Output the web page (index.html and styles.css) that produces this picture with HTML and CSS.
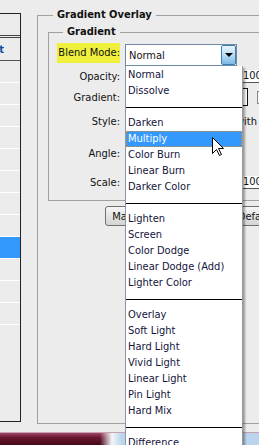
FILE: index.html
```html
<!DOCTYPE html>
<html lang="en">
<head>
    <meta charset="UTF-8">
    <link rel="stylesheet" href="styles.css">
    <title>Layer Style - Gradient Overlay</title>
</head>
<body>

<div class="page">

    <div class="styles-list">
        <div class="styles-head"></div>
        <div class="style-row first"><span class="style-name">Blending Options: Default</span></div>
        <div class="style-row"></div>
        <div class="style-row"></div>
        <div class="style-row"></div>
        <div class="style-row"></div>
        <div class="style-row"></div>
        <div class="style-row"></div>
        <div class="style-row"></div>
        <div class="style-row"></div>
        <div class="style-row selected"></div>
        <div class="style-row"></div>
        <div class="style-row"></div>
        <div class="style-row last"></div>
    </div>

    <fieldset class="group outer">
        <legend>Gradient Overlay</legend>

        <fieldset class="group inner">
            <legend>Gradient</legend>

            <div class="row row-blend">
                <label class="lbl highlight">Blend Mode:</label>
                <div class="select">
                    <span class="select-value">Normal</span>
                    <span class="select-btn"><span class="tri"></span></span>
                </div>
            </div>

            <div class="row row-opacity">
                <label class="lbl">Opacity:</label>
                <span class="num num-opacity">100</span>
            </div>

            <div class="row row-gradient">
                <label class="lbl">Gradient:</label>
                <span class="swatch"></span>
                <span class="check"></span>
            </div>

            <div class="row row-style">
                <label class="lbl">Style:</label>
                <span class="align-text">Align with Layer</span>
            </div>

            <div class="row row-angle">
                <label class="lbl">Angle:</label>
            </div>

            <div class="row row-scale">
                <label class="lbl">Scale:</label>
                <span class="num num-scale">100</span>
            </div>
        </fieldset>

        <div class="buttons">
            <button type="button" class="btn btn-make">Make Default</button>
            <button type="button" class="btn btn-reset">Reset to Default</button>
        </div>
    </fieldset>

</div>

<div class="taskbar"></div>

<!-- open blend mode list -->
<ul class="menu">
    <li>Normal</li>
    <li>Dissolve</li>
    <li class="sep"></li>
    <li>Darken</li>
    <li class="active">Multiply</li>
    <li>Color Burn</li>
    <li>Linear Burn</li>
    <li>Darker Color</li>
    <li class="sep"></li>
    <li>Lighten</li>
    <li>Screen</li>
    <li>Color Dodge</li>
    <li>Linear Dodge (Add)</li>
    <li>Lighter Color</li>
    <li class="sep"></li>
    <li>Overlay</li>
    <li>Soft Light</li>
    <li>Hard Light</li>
    <li>Vivid Light</li>
    <li>Linear Light</li>
    <li>Pin Light</li>
    <li>Hard Mix</li>
    <li class="sep"></li>
    <li>Difference</li>
</ul>

<svg class="cursor" width="13" height="20" viewBox="0 0 13 20">
    <path d="M0.5 0.5 L0.5 16.5 L4.5 12.5 L7.5 18.5 L9.5 17.5 L6.5 11.5 L11.5 11.5 Z" fill="#fff" stroke="#000" stroke-width="1"/>
</svg>

</body>
</html>
```

FILE: styles.css
```css
body {
    margin: 0;
    background-color: #ececec;
    font-family: Tahoma, "DejaVu Sans Condensed", "Liberation Sans", sans-serif;
    font-size: 11px;
    color: #111;
    overflow: hidden;
    height: 445px;
}

.page {
    display: flex;
    align-items: flex-start;
    height: 432px;
}

/* left list of styles */
.styles-list {
    box-sizing: border-box;
    width: 21px;
    flex-shrink: 0;
    height: 409px;
    margin-top: 13px;
    border-top: 1px solid #222;
    border-right: 1px solid #222;
    border-bottom: 1px solid #222;
    overflow: hidden;
}

.styles-head {
    height: 21px;
    border-bottom: 3px double #444;
}

.style-row {
    height: 21px;
    border-bottom: 1px solid #fff;
}

.style-row.first {
    box-sizing: border-box;
    height: 23px;
    border-bottom: 1px solid #555;
    display: flex;
    justify-content: flex-end;
    align-items: center;
    padding-right: 16px;
    overflow: hidden;
}

.style-name {
    font-weight: bold;
    color: #0a4f9e;
    white-space: nowrap;
}

.style-row.selected {
    background-color: #3399ff;
}

/* group boxes */
.group {
    box-sizing: border-box;
    border: 1px solid #a0a0a0;
    margin: 0;
    min-width: 0;
}

.group legend {
    font-weight: bold;
    line-height: 14px;
    padding: 0 4px;
    color: #111;
}

.outer {
    width: 260px;
    height: 416px;
    margin-left: 16px;
    margin-top: 8px;
    padding: 0 10px;
    flex-shrink: 0;
}

.outer legend {
    margin-left: 5px;
}

.inner {
    height: 176px;
    margin-top: 3px;
    padding: 0 0 0 8px;
}

.inner legend {
    margin-left: 6px;
}

.row {
    display: flex;
    align-items: center;
}

.lbl {
    width: 63px;
    flex-shrink: 0;
    text-align: right;
    margin-right: 5px;
}

.row-blend {
    align-items: flex-start;
    height: 23px;
    margin-top: 4px;
}

.highlight {
    background-color: #eef03c;
    height: 20px;
    line-height: 20px;
}

.select {
    box-sizing: border-box;
    width: 112px;
    height: 22px;
    margin-top: 1px;
    border: 1px solid #6f8aa6;
    background-color: #fff;
    display: flex;
    align-items: center;
    justify-content: space-between;
    flex-shrink: 0;
}

.select-value {
    padding-left: 3px;
}

.select-btn {
    box-sizing: border-box;
    width: 15px;
    height: 20px;
    border: 1px solid #3c7fb1;
    border-radius: 2px;
    background: linear-gradient(#e8f4fc, #bcdcf4 50%, #7cb8e4);
    display: flex;
    align-items: center;
    justify-content: center;
}

.tri {
    width: 0;
    height: 0;
    border-left: 4px solid transparent;
    border-right: 4px solid transparent;
    border-top: 4px solid #000;
}

.row-opacity { height: 20px; }
.row-gradient { height: 22px; }
.row-style { height: 26px; }
.row-angle { height: 38px; }
.row-scale { height: 20px; }

.num {
    box-sizing: border-box;
    height: 13px;
    width: 30px;
    flex-shrink: 0;
    background-color: #fff;
    border-bottom: 1px solid #555;
    padding-left: 5px;
    line-height: 12px;
    margin-left: 113px;
}

.swatch {
    box-sizing: border-box;
    width: 118px;
    height: 18px;
    flex-shrink: 0;
    margin-left: 5px;
    border: 1px solid #111;
    background-color: #fff;
}

.check {
    box-sizing: border-box;
    width: 13px;
    height: 13px;
    flex-shrink: 0;
    margin-left: 9px;
    border: 1px solid #8a8a8a;
    background-color: #f4f4f4;
}

.align-text {
    margin-left: 83px;
    white-space: nowrap;
}

.buttons {
    display: flex;
    margin-top: 5px;
    padding-left: 57px;
}

.btn {
    box-sizing: border-box;
    height: 20px;
    padding: 0 3px;
    border: 1px solid #707070;
    border-radius: 3px;
    background: linear-gradient(#f6f6f6, #e4e4e4 50%, #d4d4d4);
    font-family: inherit;
    font-size: 11px;
    color: #111;
    white-space: nowrap;
    flex-shrink: 0;
}

.btn-make {
    width: 80px;
}

.btn-reset {
    width: 92px;
    margin-left: 3px;
}

/* bottom bar */
.taskbar {
    height: 13px;
    border-top: 1px solid #c9a0ae;
    background:
        linear-gradient(to right, rgba(255,255,255,0) 100px, #f4f6f8 112px, #b9d4ec 122px),
        linear-gradient(#a04466, #6a1630 35%, #3e0612);
}

/* blend mode dropdown */
.menu {
    position: absolute;
    left: 125px;
    top: 66px;
    width: 118px;
    height: 400px;
    box-sizing: border-box;
    margin: 0;
    padding: 1px 0 0 0;
    list-style: none;
    background-color: #fff;
    border-left: 1px solid #8a98a8;
    border-right: 1px solid #9a9a9a;
    box-shadow: 2px 2px 2px rgba(0,0,0,0.35);
    color: #14143c;
}

.menu li {
    height: 16px;
    line-height: 16px;
    padding-left: 2px;
    white-space: nowrap;
}

.menu li.active {
    background-color: #3399ff;
    color: #fff;
    outline: 1px dotted #d08a3a;
    outline-offset: -1px;
}

.menu li.sep {
    display: flex;
    align-items: center;
    padding-left: 0;
}

.menu li.sep::after {
    content: "";
    flex: 1;
    border-top: 1px solid #000;
}

.cursor {
    position: absolute;
    left: 212px;
    top: 137px;
}
```
